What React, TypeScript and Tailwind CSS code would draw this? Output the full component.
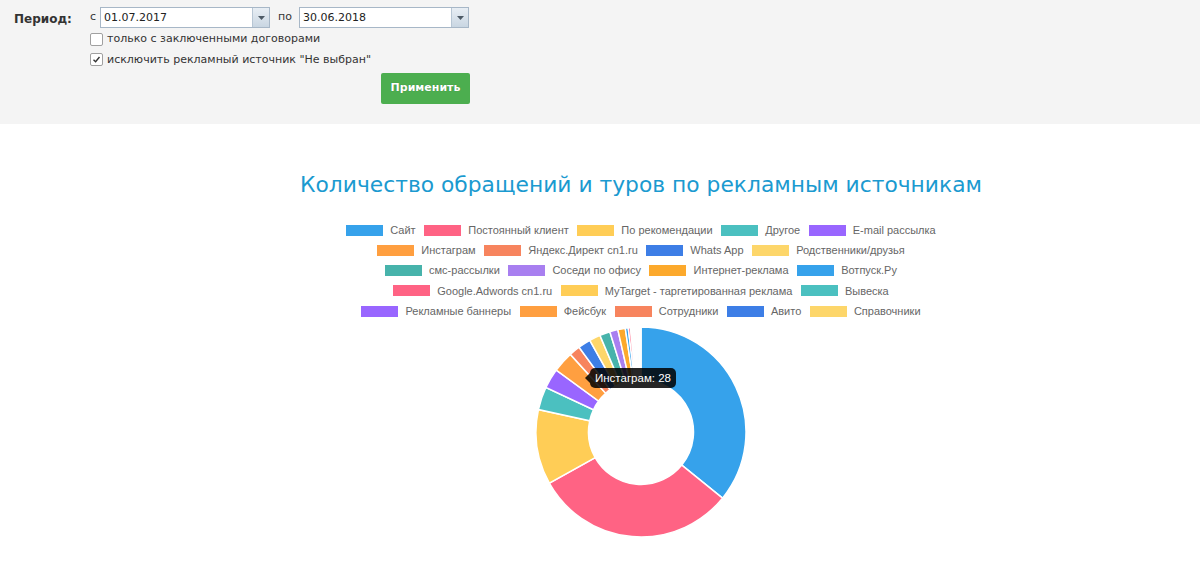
import React from 'react'

type Item = { label: string; color: string; value: number }

const BLUE = '#36a2eb'
const PINK = '#ff6384'
const YELLOW = '#ffcd56'
const TEAL = '#4bc0c0'
const PURPLE = '#9966ff'
const ORANGE = '#ff9f40'
const SALMON = '#f7845e'
const BLUE2 = '#3d7ee6'
const YELLOW2 = '#fdd66a'
const TEAL2 = '#47b3ab'
const PURPLE2 = '#a87ff0'
const ORANGE2 = '#fca92c'

const ITEMS: Item[] = [
  { label: 'Сайт', color: BLUE, value: 314 },
  { label: 'Постоянный клиент', color: PINK, value: 272 },
  { label: 'По рекомендации', color: YELLOW, value: 101 },
  { label: 'Другое', color: TEAL, value: 31 },
  { label: 'E-mail рассылка', color: PURPLE, value: 27 },
  { label: 'Инстаграм', color: ORANGE, value: 28 },
  { label: 'Яндекс.Директ cn1.ru', color: SALMON, value: 15 },
  { label: 'Whats App', color: BLUE2, value: 17 },
  { label: 'Родственники/друзья', color: YELLOW2, value: 15 },
  { label: 'смс-рассылки', color: TEAL2, value: 14 },
  { label: 'Соседи по офису', color: PURPLE2, value: 11 },
  { label: 'Интернет-реклама', color: ORANGE2, value: 10 },
  { label: 'Вотпуск.Ру', color: BLUE, value: 4 },
  { label: 'Google.Adwords cn1.ru', color: PINK, value: 3 },
  { label: 'MyTarget - таргетированная реклама', color: YELLOW, value: 2 },
  { label: 'Вывеска', color: TEAL, value: 2 },
  { label: 'Рекламные баннеры', color: PURPLE, value: 2 },
  { label: 'Фейсбук', color: ORANGE, value: 2 },
  { label: 'Сотрудники', color: SALMON, value: 2 },
  { label: 'Авито', color: BLUE2, value: 2 },
  { label: 'Справочники', color: YELLOW2, value: 2 },
]

// legend rows as the chart wrapped them
const ROWS = [
  [0, 1, 2, 3, 4],
  [5, 6, 7, 8],
  [9, 10, 11, 12],
  [13, 14, 15],
  [16, 17, 18, 19, 20],
]

function slicePath(cx: number, cy: number, r: number, ri: number, a0: number, a1: number) {
  const p = (rad: number, a: number) => [cx + rad * Math.sin(a), cy - rad * Math.cos(a)]
  const large = a1 - a0 > Math.PI ? 1 : 0
  const [x0, y0] = p(r, a0)
  const [x1, y1] = p(r, a1)
  const [x2, y2] = p(ri, a1)
  const [x3, y3] = p(ri, a0)
  return `M${x0} ${y0} A${r} ${r} 0 ${large} 1 ${x1} ${y1} L${x2} ${y2} A${ri} ${ri} 0 ${large} 0 ${x3} ${y3} Z`
}

function Donut() {
  const total = ITEMS.reduce((s, i) => s + i.value, 0)
  let acc = 0
  return (
    <svg width="214" height="214" viewBox="0 0 214 214">
      {ITEMS.map(it => {
        const a0 = (acc / total) * Math.PI * 2
        acc += it.value
        const a1 = (acc / total) * Math.PI * 2
        return (
          <path
            key={it.label}
            d={slicePath(107, 107, 105, 52.5, a0, a1)}
            fill={it.color}
            stroke="#fff"
            strokeWidth="1.5"
          />
        )
      })}
    </svg>
  )
}

function Checkbox({ checked }: { checked?: boolean }) {
  return (
    <span className="flex h-[13px] w-[13px] items-center justify-center rounded-[2px] border border-[#a0a0a0] bg-white">
      {checked && (
        <svg width="9" height="9" viewBox="0 0 9 9">
          <path d="M1.5 4.8 L3.6 6.8 L7.5 2" fill="none" stroke="#333" strokeWidth="1.4" />
        </svg>
      )}
    </span>
  )
}

function DateField({ value }: { value: string }) {
  return (
    <div className="flex h-[21px] w-[170px] border border-[#a7b7c7] bg-white">
      <span className="flex-1 pl-[3px] text-[11px] leading-[19px] text-[#222]">{value}</span>
      <span className="flex w-[17px] items-center justify-center border-l border-[#b7c6d4] bg-gradient-to-b from-[#e8eef4] to-[#c9d6e2]">
        <svg width="7" height="4" viewBox="0 0 7 4">
          <path d="M0 0 H7 L3.5 4 Z" fill="#4d5a66" />
        </svg>
      </span>
    </div>
  )
}

export default function App() {
  return (
    <div className="min-h-[561px] bg-white font-['DejaVu_Sans',Verdana,sans-serif] text-[#333]">
      {/* filter panel */}
      <div className="flex h-[124px] bg-[#f4f4f4] pl-[14px] pt-[7px]">
        <div className="w-[76px] pt-[3px] text-[12px] font-bold">Период:</div>
        <div className="flex flex-col">
          <div className="flex items-center">
            <span className="w-[10px] text-[11px]">с</span>
            <DateField value="01.07.2017" />
            <span className="ml-[8px] w-[21px] text-[11px]">по</span>
            <DateField value="30.06.2018" />
          </div>
          <label className="mt-[3px] flex items-center gap-[4px] text-[11px]">
            <Checkbox />
            только с заключенными договорами
          </label>
          <label className="mt-[4px] flex items-center gap-[4px] text-[11px]">
            <Checkbox checked />
            исключить рекламный источник "Не выбран"
          </label>
          <div className="mt-[5px] flex">
            <button className="ml-[291px] h-[31px] w-[89px] rounded-[2px] bg-[#4cae4f] text-[11px] font-bold text-white [text-shadow:0_0_1px_rgba(0,0,0,0.3)]">
              Применить
            </button>
          </div>
        </div>
      </div>

      {/* chart */}
      <div className="flex flex-col items-center pl-[82px]">
        <h1 className="mt-[47px] text-[21.8px] leading-[28px] text-[#1b9ad0]">
          Количество обращений и туров по рекламным источникам
        </h1>
        <div className="mt-[21px] flex flex-col items-center font-['Liberation_Sans',Arial,sans-serif] text-[11px] text-[#666]">
          {ROWS.map((row, ri) => (
            <div key={ri} className="flex h-[20.25px] items-center">
              {row.map(i => (
                <div key={i} className="mx-[4.3px] flex items-center">
                  <span className="h-[11px] w-[37px]" style={{ backgroundColor: ITEMS[i].color }} />
                  <span className="ml-[7px]">{ITEMS[i].label}</span>
                </div>
              ))}
            </div>
          ))}
        </div>
        <div className="relative mt-[4px]">
          <Donut />
          <div className="absolute left-[56px] top-[43px] flex h-[20px] items-center rounded-[5px] bg-black/85 px-[5px] font-['Liberation_Sans',Arial,sans-serif] text-[11.5px] text-white">
            <span className="absolute -left-[5px] top-[5px] h-0 w-0 border-y-[5px] border-r-[5px] border-y-transparent border-r-black/85" />
            Инстаграм: 28
          </div>
        </div>
      </div>
    </div>
  )
}
